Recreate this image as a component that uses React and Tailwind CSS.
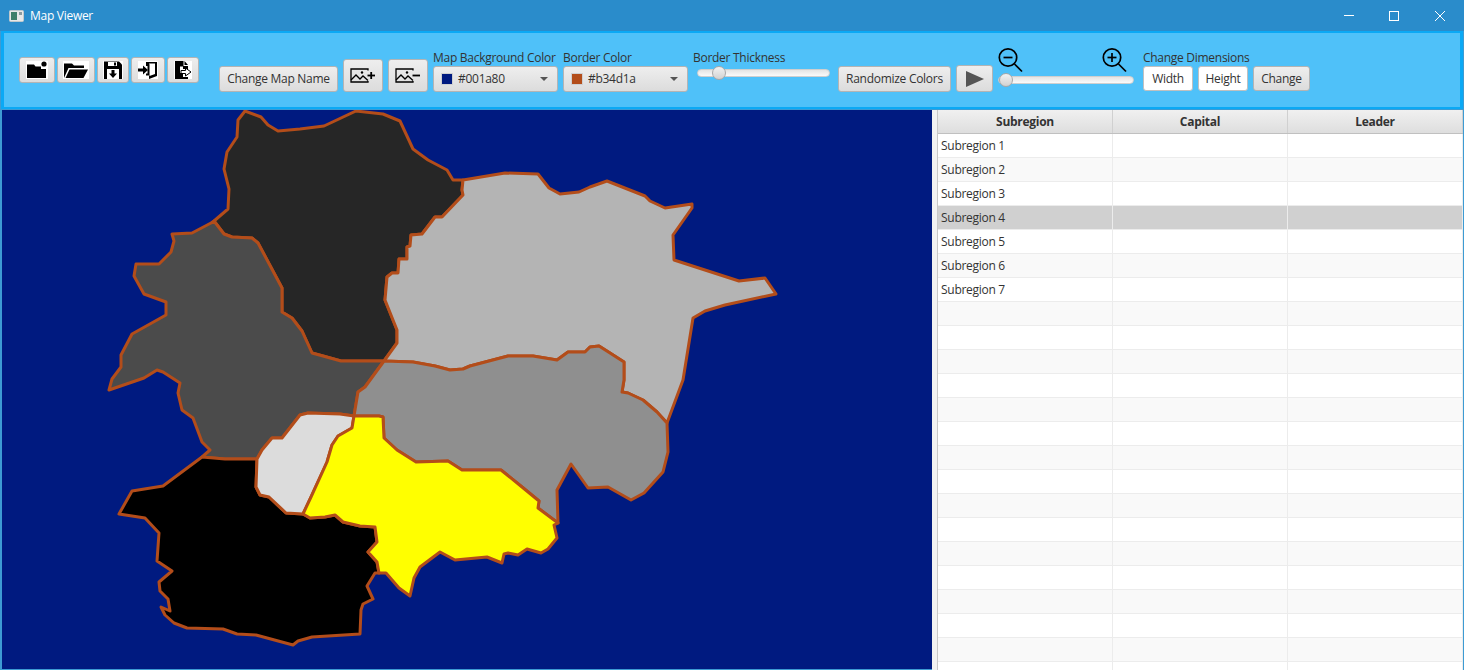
import React from 'react';

const font = { fontFamily: '"Open Sans", "Noto Sans", sans-serif' };

const regions = [
  { fill: '#262626', points: '245,111 261,117 268,125 278,131 300,129 324,126 356,111 383,114 400,121 413,149 428,160 447,170 453,180 463,180 462,190 463,195 442,217 435,217 422,234 411,235 410,246 407,247 407,259 399,259 398,273 392,273 387,277 385,300 397,330 397,343 384,361 341,361 323,356 312,353 302,331 292,318 282,312 282,288 258,243 252,238 232,237 224,234 214,221 228,209 229,189 224,169 227,152 237,137 238,120' },
  { fill: '#4b4b4b', points: '214,221 211,223 192,233 172,234 174,241 171,252 159,264 136,264 134,276 144,294 166,302 166,315 132,334 121,355 121,367 112,379 109,390 144,378 157,370 163,372 180,383 178,393 182,410 193,418 202,442 210,450 202,457 225,459 257,459 262,450 272,438 282,438 300,415 308,413 340,414 354,416 358,392 365,387 384,361 341,361 323,356 312,353 302,331 292,318 282,312 282,288 258,243 252,238 232,237 224,234' },
  { fill: '#b4b4b4', points: '463,180 505,173 538,174 549,188 560,194 579,192 590,187 607,181 645,196 650,201 665,208 692,204 692,208 673,235 674,260 739,281 765,278 776,294 725,305 705,311 693,318 683,380 667,423 657,412 643,400 628,393 622,392 624,380 624,362 610,353 599,346 590,347 585,352 568,352 557,360 533,356 508,356 470,366 463,369 450,370 435,366 413,362 384,361 397,343 397,330 385,300 387,277 392,273 398,273 399,259 407,259 407,247 410,246 411,235 422,234 435,217 442,217 463,195 462,190' },
  { fill: '#8f8f8f', points: '384,361 413,362 435,366 450,370 463,369 470,366 508,356 533,356 557,360 568,352 585,352 590,347 599,346 610,353 624,362 624,380 622,392 628,393 643,400 657,412 667,423 668,452 663,472 644,493 631,500 608,487 588,488 571,464 557,490 558,523 538,508 539,501 522,487 501,470 462,470 448,461 416,462 397,450 384,438 383,417 379,416 354,416 358,392 365,387' },
  { fill: '#000000', points: '202,457 163,486 132,491 119,514 145,518 159,533 157,561 172,571 159,582 160,591 168,599 170,611 161,607 165,615 174,623 187,628 223,629 237,634 256,635 293,645 298,641 312,637 360,634 361,610 363,604 373,599 367,586 375,573 379,573 377,562 368,552 377,542 375,527 360,526 343,522 335,515 325,517 310,518 303,514 286,513 269,497 260,495 256,487 257,459 225,459' },
  { fill: '#dcdcdc', points: '257,459 262,450 272,438 282,438 300,415 308,413 340,414 354,416 352,428 338,436 332,445 327,462 311,497 303,514 286,513 269,497 260,495 256,487' },
  { fill: '#ffff00', points: '354,416 379,416 383,417 384,438 397,450 416,462 448,461 462,470 501,470 522,487 539,501 538,508 558,523 554,525 557,538 548,549 541,553 527,549 518,555 508,553 504,554 502,563 487,557 455,560 440,552 420,567 414,578 410,596 399,588 386,573 379,573 377,562 368,552 377,542 375,527 360,526 343,522 335,515 325,517 310,518 303,514 311,497 327,462 332,445 338,436 352,428' },
];

const btn = 'flex items-center justify-center rounded-[3px] border border-[#b4b4b4] bg-linear-to-b from-[#eeeeee] to-[#dcdcdc] text-[12px] text-[#333333]';

function IconButton({ w, children }) {
  return <div className={`${btn} h-[26px]`} style={{ width: w }}>{children}</div>;
}

function NewFolderIcon() {
  return (
    <svg width="22" height="18" viewBox="0 0 22 18">
      <rect width="22" height="18" fill="#fff" />
      <path d="M1 6V3.500h7L9.500 5.500H15V8H20V17H1Z" fill="#000" />
      <circle cx="18" cy="3" r="2.600" fill="#000" />
    </svg>
  );
}

function OpenFolderIcon() {
  return (
    <svg width="26" height="18" viewBox="0 0 26 18">
      <rect width="26" height="18" fill="#fff" />
      <path d="M1 17V2.500h8l2 2h10V7H5.500L1 17Z" fill="#000" />
      <path d="M6.500 8.500H25L20.500 17H2.500Z" fill="#000" />
    </svg>
  );
}

function SaveIcon() {
  return (
    <svg width="20" height="18" viewBox="0 0 20 18">
      <rect width="20" height="18" fill="#fff" />
      <path d="M1 0.500H16L19 3.500V18H1Z" fill="#000" />
      <rect x="5" y="1" width="9" height="4" fill="#fff" />
      <rect x="11" y="1.500" width="2" height="3" fill="#000" />
      <rect x="4" y="8" width="12" height="10" fill="#fff" />
      <path d="M8.500 9H11.500V12.500H14L10 17L6 12.500H8.500Z" fill="#000" />
    </svg>
  );
}

function EnterIcon() {
  return (
    <svg width="20" height="18" viewBox="0 0 20 18">
      <rect width="20" height="18" fill="#fff" />
      <path d="M0 7.500H5V4.500L10 9L5 13.500V10.500H0Z" fill="#000" />
      <path d="M8 3.500V1H19V15L11 18V14.500H8V12.500H9.500V5H8ZM11.500 3.500V15L17 13V2.500H11Z" fill="#000" />
    </svg>
  );
}

function ExportIcon() {
  return (
    <svg width="18" height="18" viewBox="0 0 18 18">
      <rect width="18" height="18" fill="#fff" />
      <path d="M1 0H9.500V5H14V8H9V5.500H6V12H9V17.500H1Z" fill="#000" />
      <path d="M10.500 0L14 4H10.500Z" fill="#000" />
      <path d="M7 9.500H11.500V7L17 11L11.500 15V12.500H7Z" fill="#fff" stroke="#000" strokeWidth="1" />
      <rect x="1" y="16" width="13" height="2" fill="#000" />
    </svg>
  );
}

function ImageIcon({ plus }) {
  return (
    <svg width="26" height="16" viewBox="0 0 26 16" fill="none" stroke="#000" strokeWidth="1.300">
      <path d="M18 2.500V1H1V14H18V13" />
      <path d="M1 12L6 7L10 11L13 8L18 12.500" />
      <circle cx="12" cy="4.500" r="1.200" fill="#000" stroke="none" />
      <path d="M17.500 7.500H25" strokeWidth="1.800" />
      {plus && <path d="M21.200 4V11" strokeWidth="1.800" />}
    </svg>
  );
}

function ZoomIcon({ plus }) {
  return (
    <svg width="26" height="26" viewBox="0 0 26 26" fill="none" stroke="#000" strokeWidth="1.700">
      <circle cx="10" cy="10.500" r="8.700" />
      <path d="M16.500 17L24 24.500" />
      <path d="M5.500 10.500H14.500" />
      {plus && <path d="M10 6V15" />}
    </svg>
  );
}

function ColorPicker({ label, color, className }) {
  return (
    <div className={`flex flex-col ${className}`}>
      <span className="text-[12px] leading-[16px] text-[#333333] whitespace-nowrap">{label}</span>
      <div className={`${btn} h-[26px] w-[125px] justify-start pl-[7px] pr-[9px]`}>
        <span className="h-[12px] w-[12px] border border-[#d0d0d0]" style={{ backgroundColor: color }} />
        <span className="ml-[5px] flex-1">{color}</span>
        <span className="h-0 w-0 border-x-[4px] border-t-[4px] border-x-transparent border-t-[#555555]" />
      </div>
    </div>
  );
}

function Slider({ width, thumb, className }) {
  return (
    <div className={`relative h-[8px] rounded-full border border-[#cfcfcf] bg-linear-to-b from-[#e4e4e4] to-[#fafafa] ${className}`} style={{ width }}>
      <div className="absolute top-[-4px] h-[14px] w-[14px] rounded-full border border-[#a8a8a8] bg-linear-to-b from-[#f2f2f2] to-[#d2d2d2]" style={{ left: thumb }} />
    </div>
  );
}

function Toolbar() {
  return (
    <div className="ml-px mr-px flex h-[78px] items-end border-x-[3px] border-y-[2px] border-[#0ba9f5] bg-[#4fc1f9] pb-[15px] pl-[15px]">
      <div className="mb-[9px] flex gap-[2px]">
        <IconButton w={36}><NewFolderIcon /></IconButton>
        <IconButton w={38}><OpenFolderIcon /></IconButton>
        <IconButton w={32}><SaveIcon /></IconButton>
        <IconButton w={34}><EnterIcon /></IconButton>
        <IconButton w={32}><ExportIcon /></IconButton>
      </div>
      <div className={`${btn} ml-[20px] h-[26px] w-[119px]`}>Change Map Name</div>
      <div className={`${btn} ml-[5px] h-[33px] w-[40px]`}><ImageIcon plus /></div>
      <div className={`${btn} ml-[5px] h-[33px] w-[40px]`}><ImageIcon /></div>
      <ColorPicker label="Map Background Color" color="#001a80" className="ml-[5px] w-[125px]" />
      <ColorPicker label="Border Color" color="#b34d1a" className="ml-[5px] w-[125px]" />
      <div className="ml-[5px] flex h-[42px] w-[145px] flex-col">
        <span className="text-[12px] leading-[16px] text-[#333333]">Border Thickness</span>
        <Slider width={133} thumb={14} className="ml-[4px] mt-[3px]" />
      </div>
      <div className={`${btn} h-[26px] w-[113px]`}>Randomize Colors</div>
      <div className={`${btn} ml-[5px] h-[27px] w-[37px]`}>
        <svg width="20" height="16" viewBox="0 0 20 16"><path d="M1 0L19 8L1 16Z" fill="#555555" /></svg>
      </div>
      <div className="ml-[5px] flex w-[136px] flex-col">
        <div className="flex justify-between pr-[6px]">
          <ZoomIcon />
          <ZoomIcon plus />
        </div>
        <Slider width={136} thumb={0} className="mb-[8px] mt-[3px]" />
      </div>
      <div className="mb-px ml-[9px] flex flex-col">
        <span className="text-[12px] leading-[16px] text-[#333333] whitespace-nowrap">Change Dimensions</span>
        <div className="flex gap-[5px]">
          <div className="flex h-[25px] w-[50px] items-center justify-center rounded-[3px] border border-[#c0c0c0] bg-white text-[12px] text-[#333333]">Width</div>
          <div className="flex h-[25px] w-[50px] items-center justify-center rounded-[3px] border border-[#c0c0c0] bg-white text-[12px] text-[#333333]">Height</div>
          <div className={`${btn} h-[25px] w-[57px]`}>Change</div>
        </div>
      </div>
    </div>
  );
}

function SubregionTable() {
  const rows = Array.from({ length: 23 }, (_, i) => i);
  return (
    <div className="flex w-[526px] flex-col overflow-hidden border-l border-[#c8c8c8] bg-white">
      <div className="grid h-[24px] shrink-0 grid-cols-[175px_175px_175px] border-b border-[#c0c0c0] bg-linear-to-b from-[#f0f0f0] to-[#dedede]">
        {['Subregion', 'Capital', 'Leader'].map((h) => (
          <div key={h} className="flex items-center justify-center border-r border-[#d0d0d0] pt-px text-[12px] font-bold text-[#333333]">{h}</div>
        ))}
      </div>
      {rows.map((i) => (
        <div
          key={i}
          className={`grid h-[24px] shrink-0 grid-cols-[175px_175px_175px] border-b border-[#ececec] ${i === 3 ? 'bg-[#d0d0d0]' : i % 2 === 0 ? 'bg-white' : 'bg-[#f9f9f9]'}`}
        >
          <div className="flex items-center border-r border-[#ececec] pl-[3px] text-[12px] text-[#333333]">{i < 7 ? `Subregion ${i + 1}` : ''}</div>
          <div className="border-r border-[#ececec]" />
          <div className="border-r border-[#ececec]" />
        </div>
      ))}
    </div>
  );
}

export default function App() {
  return (
    <div className="flex h-[670px] w-[1464px] flex-col overflow-hidden bg-[#3d9bd3] tracking-[-0.28px]" style={font}>
      <div className="flex h-[31px] shrink-0 items-center bg-[#2a8ccb] pl-[9px] text-white">
        <svg width="15" height="12" viewBox="0 0 15 12" className="mr-[6px]">
          <rect x="0.500" y="0.500" width="14" height="11" rx="1" fill="#e8e8e8" stroke="#bfc8cc" />
          <rect x="2" y="2" width="6" height="8" fill="#3f7f6a" />
          <rect x="10" y="2" width="3" height="3" fill="#8a9a9f" />
        </svg>
        <span className="text-[12px]">Map Viewer</span>
        <div className="ml-auto flex items-center">
          <div className="mr-[35px] h-px w-[10px] bg-white" />
          <div className="mr-[36px] h-[10px] w-[10px] border border-white" />
          <svg width="10" height="10" viewBox="0 0 10 10" className="mr-[19px]">
            <path d="M0 0L10 10M10 0L0 10" stroke="#fff" strokeWidth="1" />
          </svg>
        </div>
      </div>
      <Toolbar />
      <div className="flex min-h-0 flex-1 pl-[2px] pr-px pt-px">
        <div className="h-[559px] w-[930px] shrink-0 bg-[#001a80]">
          <svg width="930" height="560" viewBox="2 110 930 560">
            {regions.map((r, i) => (
              <polygon key={i} points={r.points} fill={r.fill} stroke="#b34d1a" strokeWidth="3" strokeLinejoin="round" />
            ))}
          </svg>
        </div>
        <div className="w-[5px] shrink-0 bg-[#f2f2f2]" />
        <SubregionTable />
      </div>
    </div>
  );
}
